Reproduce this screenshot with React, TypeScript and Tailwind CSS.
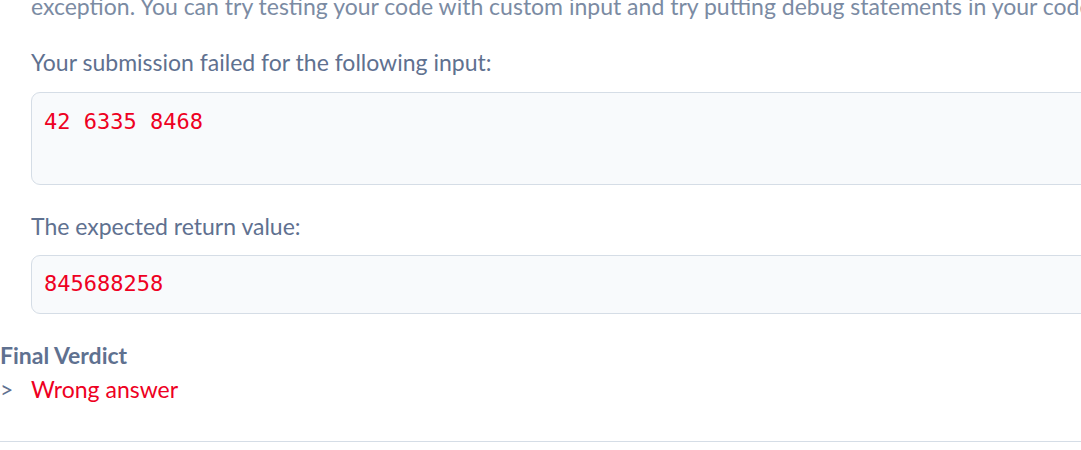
export default function App() {
  const sans = { fontFamily: '"Lato", "Noto Sans", sans-serif' };
  return (
    <div className="w-[1081px] h-[450px] overflow-hidden bg-white" style={sans}>
      <div className="w-[1200px] -mt-[12px]">
        <div className="pl-[31px] text-[23px] leading-[36px] text-[#7b8ba3] whitespace-nowrap">
          exception. You can try testing your code with custom input and try putting debug statements in your code
        </div>
        <div className="pl-[31px] mt-[20px] text-[23px] leading-[36px] text-[#5f7190]">
          Your submission failed for the following input:
        </div>
        <div className="ml-[31px] mt-[12px] h-[93px] rounded-[9px] border border-[#d5dde6] bg-[#f8fafc] px-[12px] pt-[14px]">
          <pre className="text-[22px] leading-[30px] text-[#ee0022] font-['DejaVu_Sans_Mono',monospace]">42 6335 8468</pre>
        </div>
        <div className="pl-[31px] mt-[23px] text-[23px] leading-[36px] text-[#5f7190]">
          The expected return value:
        </div>
        <div className="ml-[31px] mt-[11px] h-[59px] rounded-[9px] border border-[#d5dde6] bg-[#f8fafc] px-[12px] pt-[13px]">
          <pre className="text-[22px] leading-[30px] text-[#ee0022] font-['DejaVu_Sans_Mono',monospace]">845688258</pre>
        </div>
        <div className="mt-[24px] text-[23px] leading-[34px] font-bold text-[#5f7190]">Final Verdict</div>
        <div className="flex items-center text-[23px] leading-[34px]">
          <span className="w-[31px] text-[#5f7190]">&gt;</span>
          <span className="text-[#ee0022]">Wrong answer</span>
        </div>
        <div className="mt-[35px] h-px bg-[#d5dde6]" />
      </div>
    </div>
  );
}
